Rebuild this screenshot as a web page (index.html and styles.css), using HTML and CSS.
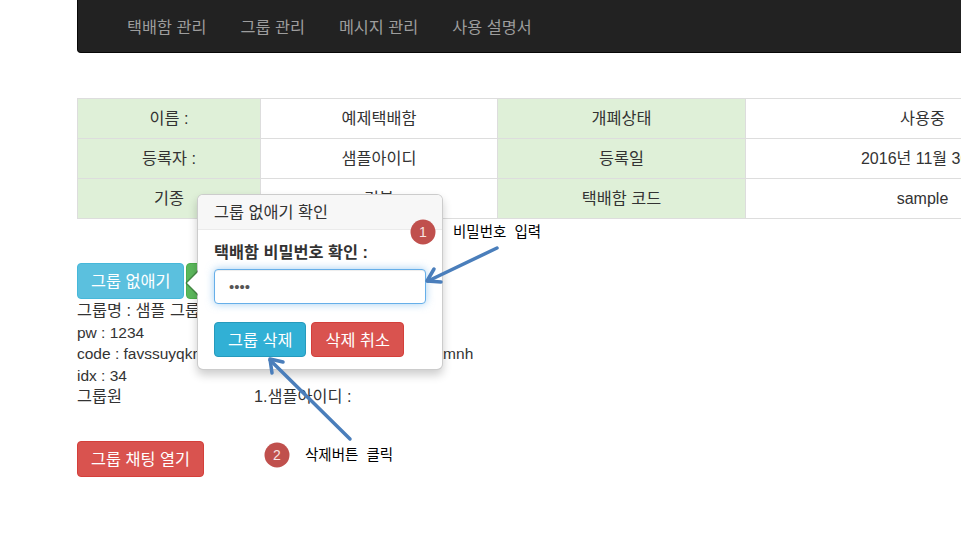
FILE: index.html
```html
<!DOCTYPE html>
<html lang="ko">
<head>
<meta charset="utf-8">
<title>그룹 관리</title>
<link rel="stylesheet" href="styles.css">
</head>
<body>
<div class="page">
  <nav class="navbar">
    <ul class="nav">
      <li><a href="#">택배함 관리</a></li>
      <li><a href="#">그룹 관리</a></li>
      <li><a href="#">메시지 관리</a></li>
      <li><a href="#">사용 설명서</a></li>
    </ul>
  </nav>

  <table class="info-table">
    <colgroup>
      <col class="c1"><col class="c2"><col class="c3"><col class="c4">
    </colgroup>
    <tr>
      <td class="head">이름 :</td>
      <td>예제택배함</td>
      <td class="head">개폐상태</td>
      <td>사용중</td>
    </tr>
    <tr>
      <td class="head">등록자 :</td>
      <td>샘플아이디</td>
      <td class="head">등록일</td>
      <td class="latin">2016년 11월 30일</td>
    </tr>
    <tr>
      <td class="head">기종</td>
      <td>기본</td>
      <td class="head">택배함 코드</td>
      <td class="latin">sample</td>
    </tr>
  </table>

  <div class="actions">
    <button class="btn btn-info">그룹 없애기</button>
    <button class="btn btn-success">그룹 나가기</button>
  </div>

  <div class="details">
    <div>그룹명 : 샘플 그룹</div>
    <div class="latin-sm">pw : 1234</div>
    <div class="latin-sm">code : favssuyqkrbzgwtxhleonpacjdvqmrxsulkfwoyzrkmnh</div>
    <div class="latin-sm">idx : 34</div>
    <div class="members"><span class="members-label">그룹원</span><span>1.샘플아이디 :</span></div>
  </div>

  <button class="btn btn-danger chat">그룹 채팅 열기</button>
</div>

<div class="popover">
  <h3 class="popover-title">그룹 없애기 확인</h3>
  <div class="popover-content">
    <label class="pw-label" for="pw">택배함 비밀번호 확인 :</label>
    <input id="pw" class="form-control" type="password" value="1234">
    <div class="popover-buttons">
      <button class="btn btn-info-active">그룹 삭제</button>
      <button class="btn btn-danger">삭제 취소</button>
    </div>
  </div>
</div>

<svg class="annotations" width="961" height="535" viewBox="0 0 961 535">
  <circle cx="423" cy="232" r="12.5" fill="#c0504d"/>
  <text x="423" y="237" text-anchor="middle" class="badge-num">1</text>
  <text x="453" y="237" class="note">비밀번호 입력</text>
  <line x1="497" y1="248" x2="428" y2="281" class="arrow"/>
  <polyline points="434,269 427,281 441,282" class="arrow"/>

  <circle cx="277" cy="455" r="12.5" fill="#c0504d"/>
  <text x="277" y="460" text-anchor="middle" class="badge-num">2</text>
  <text x="305" y="460" class="note">삭제버튼 클릭</text>
  <line x1="350" y1="439" x2="270" y2="360" class="arrow"/>
  <polyline points="272,373 270,359 283,362" class="arrow"/>
</svg>
</body>
</html>
```

FILE: styles.css
```css
html, body {
  margin: 0;
  padding: 0;
  overflow: hidden;
  background: #fff;
}

body {
  position: relative;
  width: 961px;
  height: 535px;
  font-family: "Liberation Sans", "Noto Sans CJK KR", sans-serif;
  font-size: 16.3px;
  line-height: 21.5px;
  color: #333;
}

.latin {
  font-size: 16px;
}

.latin-sm {
  font-size: 15.5px;
}

.page {
  margin-left: 77px;
  width: 1022px;
}

/* navbar */
.navbar {
  height: 53px;
  box-sizing: border-box;
  background: #222;
  border: 1px solid #080808;
  border-top: none;
  border-radius: 0 0 4px 4px;
  display: flex;
  align-items: center;
  padding-left: 32px;
  padding-top: 2px;
}

.nav {
  list-style: none;
  margin: 0;
  padding: 0;
  display: flex;
}

.nav a {
  display: block;
  padding: 0 17px;
  color: #9d9d9d;
  text-decoration: none;
  line-height: 20px;
}

/* info table */
.info-table {
  margin-top: 45px;
  width: 1022px;
  border-collapse: collapse;
  table-layout: fixed;
}

.c1 { width: 183px; }
.c2 { width: 237px; }
.c3 { width: 248px; }
.c4 { width: 354px; }

.info-table tr {
  height: 40px;
}

.info-table td {
  border: 1px solid #ddd;
  text-align: center;
  vertical-align: middle;
  padding: 0;
  white-space: nowrap;
}

.info-table td.head {
  background: #dff0d8;
}

/* buttons */
.btn {
  display: inline-block;
  box-sizing: border-box;
  height: 36px;
  margin: 0;
  padding: 7px 13px;
  border: 1px solid transparent;
  border-radius: 4px;
  font-family: "Liberation Sans", "Noto Sans CJK KR", sans-serif;
  font-size: 16.3px;
  line-height: 20px;
  color: #fff;
  white-space: nowrap;
  cursor: pointer;
}

.btn-info {
  background: #5bc0de;
  border-color: #46b8da;
}

.btn-info-active {
  background: #31b0d5;
  border-color: #269abc;
}

.btn-success {
  background: #5cb85c;
  border-color: #4cae4c;
}

.btn-danger {
  background: #d9534f;
  border-color: #d43f3a;
}

.actions {
  margin-top: 44px;
  display: flex;
  gap: 2px;
  height: 37px;
}

.details {
  white-space: nowrap;
}

.members {
  display: flex;
}

.members-label {
  width: 177px;
}

.chat {
  margin-top: 33px;
}

/* popover */
.popover {
  position: absolute;
  left: 197px;
  top: 194px;
  width: 246px;
  box-sizing: border-box;
  background: #fff;
  border: 1px solid rgba(0, 0, 0, 0.2);
  border-radius: 6px;
  box-shadow: 0 5px 10px rgba(0, 0, 0, 0.2);
}

.popover::before,
.popover::after {
  content: "";
  position: absolute;
  width: 0;
  height: 0;
  border-style: solid;
  border-color: transparent;
}

.popover::before {
  left: -13px;
  top: 75px;
  border-width: 13px 13px 13px 0;
  border-right-color: rgba(0, 0, 0, 0.25);
}

.popover::after {
  left: -11px;
  top: 77px;
  border-width: 11px 11px 11px 0;
  border-right-color: #fff;
}

.popover-title {
  margin: 0;
  padding: 8px 16px;
  font-size: 16.3px;
  font-weight: normal;
  line-height: 18px;
  background: #f7f7f7;
  border-bottom: 1px solid #ebebeb;
  border-radius: 5px 5px 0 0;
}

.popover-content {
  padding: 12px 16px 12px;
}

.pw-label {
  display: block;
  font-weight: bold;
  line-height: 21px;
  margin-bottom: 6px;
}

.form-control {
  display: block;
  box-sizing: border-box;
  width: 212px;
  height: 35px;
  padding: 6px 14px;
  border: 1px solid #66afe9;
  border-radius: 4px;
  outline: none;
  font-size: 15px;
  color: #555;
  box-shadow: inset 0 1px 1px rgba(0, 0, 0, 0.075), 0 0 8px rgba(102, 175, 233, 0.6);
}

.popover-buttons {
  margin-top: 18px;
  display: flex;
  gap: 5px;
}

.popover-buttons .btn {
  height: 35px;
  padding: 7px 13px 6px;
}

/* annotations */
.annotations {
  position: absolute;
  left: 0;
  top: 0;
  pointer-events: none;
}

.badge-num {
  font-family: "Liberation Sans", sans-serif;
  font-size: 14px;
  fill: #f8e4e3;
}

.note {
  font-family: "Noto Sans CJK KR", sans-serif;
  font-size: 14.5px;
  word-spacing: 4px;
  fill: #000;
}

.arrow {
  fill: none;
  stroke: #4a7ebb;
  stroke-width: 3.5;
  stroke-linecap: round;
  stroke-linejoin: round;
}
```
